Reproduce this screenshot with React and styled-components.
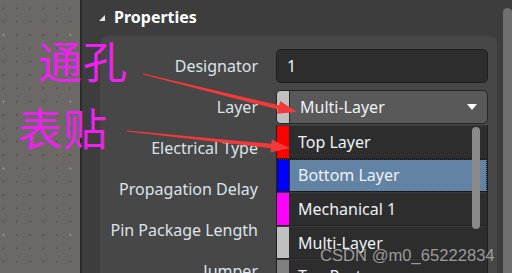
import styled, { createGlobalStyle } from "styled-components";

const GlobalStyle = createGlobalStyle`
    html, body {
        margin: 0;
        padding: 0;
        background: #3d3d3d;
        overflow: hidden;
    }
    body {
        font-family: "Noto Sans", "Liberation Sans", sans-serif;
    }
`;

const layers = [
    { name: "Top Layer", color: "#ff0000" },
    { name: "Bottom Layer", color: "#0000ff", active: true },
    { name: "Mechanical 1", color: "#ff00ff" },
    { name: "Multi-Layer", color: "#c0c0c0" },
    { name: "Top Paste", color: "#808080" },
];

const rows = ["Electrical Type", "Propagation Delay", "Pin Package Length", "Jumper"];

function arrowPoints([x0, y0], [x1, y1], tailW, shaftW, headW, headL) {
    const dx = x1 - x0;
    const dy = y1 - y0;
    const len = Math.hypot(dx, dy);
    const ux = dx / len;
    const uy = dy / len;
    const nx = -uy;
    const ny = ux;
    const bx = x1 - ux * headL;
    const by = y1 - uy * headL;
    const p = (x, y, w) => [x + (nx * w) / 2, y + (ny * w) / 2];
    const pts = [
        p(x0, y0, tailW),
        p(bx, by, shaftW),
        p(bx, by, headW),
        [x1, y1],
        p(bx, by, -headW),
        p(bx, by, -shaftW),
        p(x0, y0, -tailW),
    ];
    return pts.map(([x, y]) => `${x.toFixed(1)},${y.toFixed(1)}`).join(" ");
}

function App() {
    return (
        <>
            <GlobalStyle />
            <Screen>
                <Canvas />
                <Divider />
                <Panel>
                    <PanelHeader>
                        <Triangle />
                        Properties
                    </PanelHeader>
                    <Section>
                        <Row>
                            <Label>Designator</Label>
                            <TextInput>1</TextInput>
                        </Row>
                        <Row>
                            <Label>Layer</Label>
                            <SelectBox>
                                <Swatch $color="#c0c0c0" $rounded />
                                <SelectText>Multi-Layer</SelectText>
                                <Caret />
                                <Menu>
                                    {layers.map((l) => (
                                        <MenuItem key={l.name} $active={l.active}>
                                            <Swatch $color={l.color} />
                                            <ItemText>{l.name}</ItemText>
                                        </MenuItem>
                                    ))}
                                    <MenuScroll />
                                </Menu>
                            </SelectBox>
                        </Row>
                        {rows.map((r) => (
                            <Row key={r}>
                                <Label>{r}</Label>
                            </Row>
                        ))}
                    </Section>
                </Panel>
                <ScrollTrack>
                    <ScrollThumb />
                </ScrollTrack>

                <Note $top={34} $left={38}>通孔</Note>
                <Note $top={101} $left={18}>表贴</Note>
                <Arrows width="512" height="273" viewBox="0 0 512 273">
                    <polygon points={arrowPoints([143, 74], [297, 112], 1, 4.5, 13, 19)} />
                    <polygon points={arrowPoints([127, 131], [290, 148], 1, 4.5, 13, 19)} />
                </Arrows>
                <Watermark>CSDN @m0_65222834</Watermark>
            </Screen>
        </>
    );
}

const Screen = styled.div`
    position: relative;
    display: flex;
    width: 512px;
    height: 273px;
    overflow: hidden;
    background: #3d3d3d;
`;

const Canvas = styled.div`
    flex: 0 0 80px;
    background-color: #6b6866;
    background-image:
        radial-gradient(circle, #9a9896 0.9px, transparent 1.3px),
        radial-gradient(circle, #585654 0.7px, transparent 1.2px);
    background-size: 66.67px 66.67px, 13.33px 13.33px;
    background-position: -29.8px 1.7px, -3.2px 1.7px;
`;

const Divider = styled.div`
    flex: 0 0 2px;
    background: #2b2b2b;
`;

const Panel = styled.div`
    flex: 1;
    display: flex;
    flex-direction: column;
    min-width: 0;
    min-height: 0;
    overflow: hidden;
`;

const PanelHeader = styled.div`
    flex: 0 0 36px;
    display: flex;
    align-items: center;
    gap: 9px;
    padding-left: 17px;
    padding-bottom: 2px;
    box-sizing: border-box;
    color: #ffffff;
    font-weight: 700;
    font-size: 16px;
`;

const Triangle = styled.div`
    width: 0;
    height: 0;
    border-left: 6px solid transparent;
    border-bottom: 6px solid #e8e8e8;
    margin-top: 1px;
`;

const Section = styled.div`
    flex: 1 0 auto;
    margin: 0 6px 0 18px;
    padding: 13px 10px 0 0;
    background: #474747;
    border-radius: 7px 7px 0 0;
    display: flex;
    flex-direction: column;
    gap: 7px;
`;

const Row = styled.div`
    display: grid;
    grid-template-columns: 158px 212px;
    column-gap: 18px;
    height: 34px;
    flex: 0 0 34px;
    align-items: center;
`;

const Label = styled.div`
    text-align: right;
    color: #dce3ea;
    font-size: 16px;
    white-space: nowrap;
`;

const TextInput = styled.div`
    height: 34px;
    box-sizing: border-box;
    background: #2d2d2d;
    border: 1px solid #1f1f1f;
    border-radius: 5px;
    color: #f0f0f0;
    font-size: 16px;
    display: flex;
    align-items: center;
    padding-left: 10px;
`;

const SelectBox = styled.div`
    position: relative;
    height: 34px;
    box-sizing: border-box;
    background: #595959;
    border: 1px solid #262626;
    border-radius: 5px;
    display: flex;
    align-items: stretch;
`;

const Swatch = styled.div`
    flex: 0 0 12px;
    background: ${(p) => p.$color};
    border-right: 1px solid #2a2a2a;
    border-radius: ${(p) => (p.$rounded ? "4px 0 0 4px" : "0")};
`;

const SelectText = styled.div`
    flex: 1;
    display: flex;
    align-items: center;
    padding-left: 10px;
    color: #eef2f6;
    font-size: 16px;
`;

const Caret = styled.div`
    align-self: center;
    width: 0;
    height: 0;
    margin-right: 10px;
    border-left: 5.5px solid transparent;
    border-right: 5.5px solid transparent;
    border-top: 6px solid #ffffff;
`;

const Menu = styled.div`
    position: absolute;
    top: 34px;
    left: -1px;
    width: 212px;
    background: #2d2d2d;
    border-left: 1px solid #1f1f1f;
    border-right: 1px solid #1f1f1f;
    box-sizing: border-box;
`;

const MenuItem = styled.div`
    display: flex;
    height: 33.6px;
    box-sizing: border-box;
    border-bottom: 1px solid #222222;
    border-top: 1px solid #3a3a3a;
    background: ${(p) => (p.$active ? "#6283a3" : "#2d2d2d")};
    outline: ${(p) => (p.$active ? "1px dotted #111" : "none")};
    outline-offset: -1px;
`;

const ItemText = styled.div`
    display: flex;
    align-items: center;
    padding-left: 8px;
    color: #eef2f6;
    font-size: 16px;
`;

const MenuScroll = styled.div`
    position: absolute;
    top: 2px;
    right: 7px;
    width: 8px;
    height: 102px;
    border-radius: 4px;
    background: #8a8a8a;
`;

const ScrollTrack = styled.div`
    flex: 0 0 9px;
    padding-top: 8px;
    display: flex;
`;

const ScrollThumb = styled.div`
    flex: 1;
    background: #6f6f6f;
    border-radius: 5px 5px 0 0;
`;

const Note = styled.div`
    position: absolute;
    top: ${(p) => p.$top}px;
    left: ${(p) => p.$left}px;
    color: #ee22ee;
    font-family: "Noto Sans CJK SC", sans-serif;
    font-size: 44px;
    line-height: 1.2;
    letter-spacing: 1px;
    pointer-events: none;
`;

const Arrows = styled.svg`
    position: absolute;
    inset: 0;
    pointer-events: none;
    fill: #f23a3a;
`;

const Watermark = styled.div`
    position: absolute;
    left: 320px;
    top: 246px;
    color: rgba(175, 175, 175, 0.85);
    font-family: "Liberation Sans", Arial, sans-serif;
    font-size: 16.6px;
    pointer-events: none;
`;

export default App;
